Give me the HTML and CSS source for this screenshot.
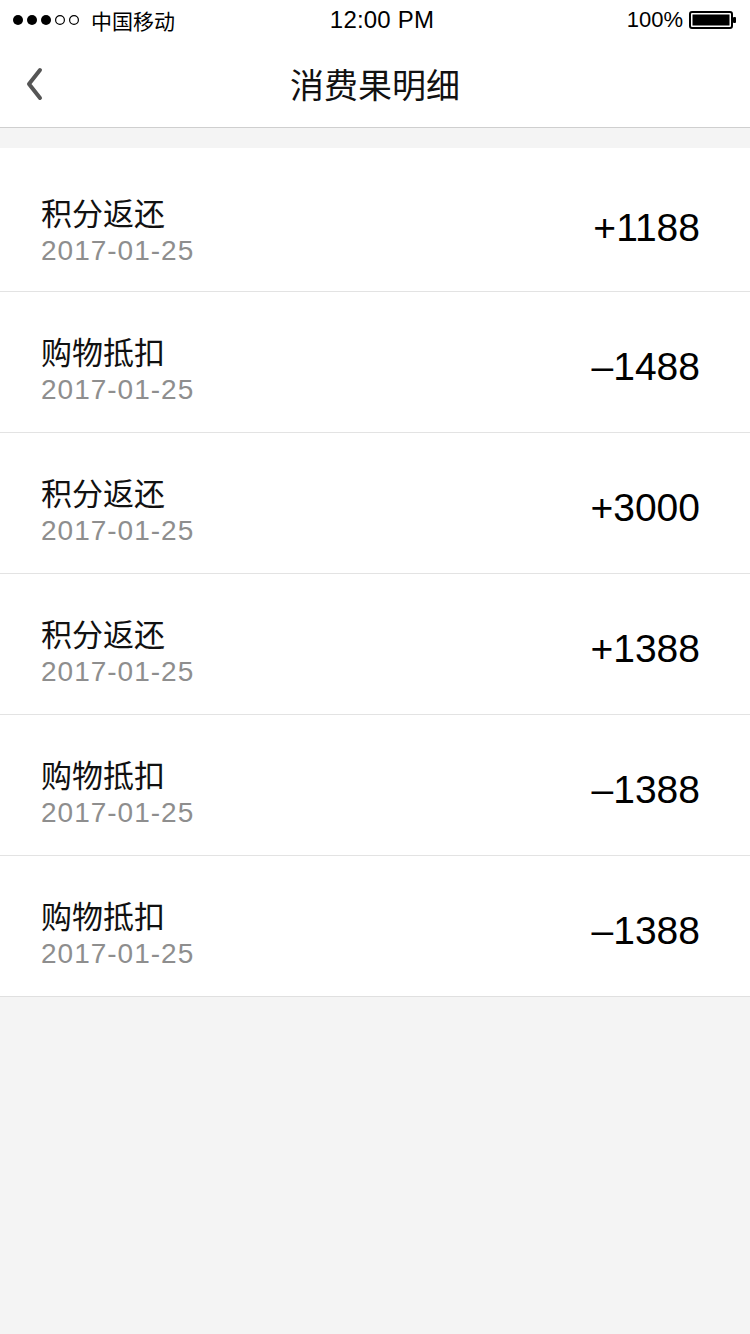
FILE: index.html
```html
<!DOCTYPE html>
<html lang="zh-CN">
<head>
<meta charset="utf-8">
<title>消费果明细</title>
<link rel="stylesheet" href="styles.css">
</head>
<body>
<div class="page">
  <div class="statusbar">
    <div class="sb-left">
      <svg class="signal" width="70" height="12" viewBox="0 0 70 12">
        <circle cx="5" cy="6" r="5" fill="#000"/>
        <circle cx="19" cy="6" r="5" fill="#000"/>
        <circle cx="33" cy="6" r="5" fill="#000"/>
        <circle cx="47" cy="6" r="4.4" fill="none" stroke="#000" stroke-width="1.2"/>
        <circle cx="61" cy="6" r="4.4" fill="none" stroke="#000" stroke-width="1.2"/>
      </svg>
      <span class="carrier">中国移动</span>
    </div>
    <div class="sb-time">12:00 PM</div>
    <div class="sb-right">
      <span class="pct">100%</span>
      <svg class="battery" width="48" height="18" viewBox="0 0 48 18">
        <rect x="1" y="1" width="42" height="16" rx="2" fill="none" stroke="#000" stroke-width="2"/>
        <rect x="3.5" y="3.5" width="37" height="11" fill="#000"/>
        <rect x="44" y="6" width="3" height="6" rx="1" fill="#000"/>
      </svg>
    </div>
  </div>

  <div class="navbar">
    <div class="nav-left">
      <svg class="back" width="20" height="34" viewBox="0 0 20 34">
        <polyline points="14,3 3,17 14,31" fill="none" stroke="#555" stroke-width="4" stroke-linecap="round" stroke-linejoin="round"/>
      </svg>
    </div>
    <div class="nav-title">消费果明细</div>
    <div class="nav-right"></div>
  </div>

  <div class="list">
    <div class="row first">
      <div class="info"><div class="title">积分返还</div><div class="date">2017-01-25</div></div>
      <div class="amount">+1188</div>
    </div>
    <div class="row">
      <div class="info"><div class="title">购物抵扣</div><div class="date">2017-01-25</div></div>
      <div class="amount">–1488</div>
    </div>
    <div class="row">
      <div class="info"><div class="title">积分返还</div><div class="date">2017-01-25</div></div>
      <div class="amount">+3000</div>
    </div>
    <div class="row">
      <div class="info"><div class="title">积分返还</div><div class="date">2017-01-25</div></div>
      <div class="amount">+1388</div>
    </div>
    <div class="row">
      <div class="info"><div class="title">购物抵扣</div><div class="date">2017-01-25</div></div>
      <div class="amount">–1388</div>
    </div>
    <div class="row">
      <div class="info"><div class="title">购物抵扣</div><div class="date">2017-01-25</div></div>
      <div class="amount">–1388</div>
    </div>
  </div>
</div>
</body>
</html>
```

FILE: styles.css
```css
* { box-sizing: border-box; }
html, body {
  margin: 0;
  padding: 0;
  background: #f4f4f4;
  font-family: "Liberation Sans", "Noto Sans CJK SC", sans-serif;
  color: #000;
}
.page {
  width: 750px;
  min-height: 1334px;
  background: #f4f4f4;
}
.statusbar {
  height: 40px;
  background: #fff;
  display: flex;
  align-items: center;
  justify-content: space-between;
  padding: 0 13px 0 13px;
}
.sb-left {
  display: flex;
  align-items: center;
  gap: 8px;
  width: 200px;
}
.carrier {
  font-family: "Noto Sans CJK SC", sans-serif;
  font-size: 21px;
  line-height: 40px;
}
.sb-time {
  font-size: 24px;
  line-height: 40px;
  font-weight: 400;
  letter-spacing: 0.2px;
  margin-left: 14px;
}
.sb-right {
  width: 200px;
  display: flex;
  align-items: center;
  justify-content: flex-end;
  gap: 6px;
}
.pct {
  font-size: 22px;
  line-height: 40px;
}
.battery { display: block; }
.navbar {
  height: 88px;
  background: #fff;
  border-bottom: 1px solid #cfcfcf;
  display: grid;
  grid-template-columns: 1fr auto 1fr;
  align-items: center;
}
.nav-left {
  padding-left: 26px;
  display: flex;
  align-items: center;
}
.back { display: block; }
.nav-title {
  font-family: "Noto Sans CJK SC", sans-serif;
  font-size: 34px;
  color: #111;
  line-height: 40px;
}
.list {
  margin-top: 20px;
  background: #fff;
  border-bottom: 1px solid #e0e0e0;
}
.row {
  height: 141px;
  padding: 16px 50px 0 41px;
  display: flex;
  align-items: center;
  justify-content: space-between;
  border-bottom: 1px solid #e3e3e3;
}
.row.first {
  height: 144px;
  padding-top: 22px;
}
.row:last-child { border-bottom: none; height: 140px; }
.info {
  display: flex;
  flex-direction: column;
}
.title {
  font-family: "Noto Sans CJK SC", sans-serif;
  font-size: 31px;
  line-height: 40px;
  color: #111;
}
.date {
  font-size: 28px;
  line-height: 38px;
  color: #8e8e8e;
  letter-spacing: 1px;
}
.amount {
  font-size: 39px;
  line-height: 44px;
  color: #000;
  margin-bottom: 6px;
}
```
